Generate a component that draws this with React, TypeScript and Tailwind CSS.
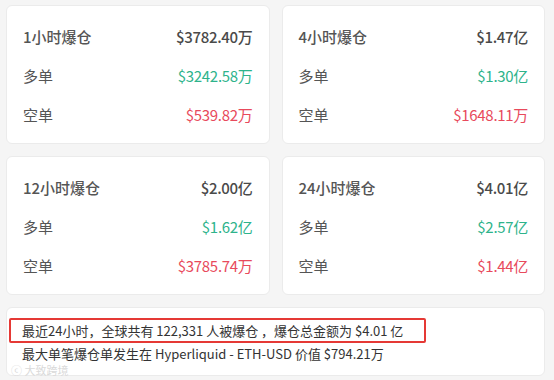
const stats = [
  {
    title: "1小时爆仓",
    total: "$3782.40万",
    long: "$3242.58万",
    short: "$539.82万",
  },
  {
    title: "4小时爆仓",
    total: "$1.47亿",
    long: "$1.30亿",
    short: "$1648.11万",
  },
  {
    title: "12小时爆仓",
    total: "$2.00亿",
    long: "$1.62亿",
    short: "$3785.74万",
  },
  {
    title: "24小时爆仓",
    total: "$4.01亿",
    long: "$2.57亿",
    short: "$1.44亿",
  },
];

function StatCard({ s }: { s: (typeof stats)[number] }) {
  return (
    <div className="bg-white rounded-md border border-[#ebebeb] pl-4 pr-4 pt-[12px] pb-[8px]">
      <div className="flex items-center justify-between h-[39px]">
        <span className="text-[15px] font-medium text-[#555]">{s.title}</span>
        <span className="text-[15px] font-medium text-[#4a4a4a] tracking-[-0.3px]">
          {s.total}
        </span>
      </div>
      <div className="flex items-center justify-between h-[39px]">
        <span className="text-[15px] text-[#555]">多单</span>
        <span className="text-[15px] text-[#2eb38b] tracking-[-0.3px]">
          {s.long}
        </span>
      </div>
      <div className="flex items-center justify-between h-[39px]">
        <span className="text-[15px] text-[#555]">空单</span>
        <span className="text-[15px] text-[#e84a5c] tracking-[-0.3px]">
          {s.short}
        </span>
      </div>
    </div>
  );
}

export default function App() {
  return (
    <div
      className="w-[554px] h-[380px] bg-[#f5f5f5] pl-[6px] pr-[9px] pt-[5px] overflow-hidden"
      style={{ fontFamily: '"Noto Sans CJK SC", "Noto Sans", sans-serif' }}
    >
      <div className="grid grid-cols-2 gap-x-3 gap-y-3">
        {stats.map((s) => (
          <StatCard key={s.title} s={s} />
        ))}
      </div>
      <div className="mt-3 bg-white rounded-md border border-[#ebebeb] h-[69px] pt-[10px] pl-[2px] relative">
        <div className="w-[417px] h-[25px] border-2 border-[#e53935] rounded-[2px] flex items-center pl-[11px]">
          <span className="text-[13px] text-[#333] whitespace-nowrap">
            最近24小时，全球共有 122,331 人被爆仓 ，爆仓总金额为 $4.01 亿
          </span>
        </div>
        <div className="pl-[13px] text-[13px] text-[#333] leading-[22px] whitespace-nowrap">
          最大单笔爆仓单发生在 Hyperliquid - ETH-USD 价值 $794.21万
        </div>
        <div className="absolute left-[4px] bottom-[-1px] text-[11px] text-[#dadada] leading-[12px]">
          ⓒ 大致跨境
        </div>
      </div>
    </div>
  );
}
